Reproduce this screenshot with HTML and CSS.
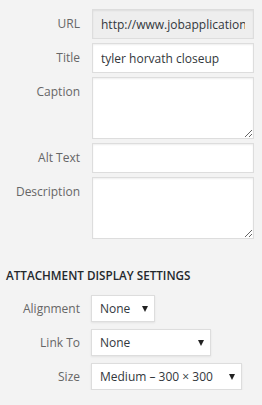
FILE: index.html
```html
<!DOCTYPE html>
<html lang="en">
<head>
    <meta charset="UTF-8">
    <meta name="viewport" content="width=device-width, initial-scale=1.0">
    <title>Attachment Details</title>
    <link rel="stylesheet" href="styles.css">
</head>
<body>
    <div class="details">
        <label class="field-label">URL</label>
        <input class="field-input readonly" type="text" value="http://www.jobapplicationhelp.com/wp-content/uploads/tyler-horvath-closeup.jpg" readonly>

        <label class="field-label">Title</label>
        <input class="field-input" type="text" value="tyler horvath closeup">

        <label class="field-label">Caption</label>
        <textarea class="field-input area"></textarea>

        <label class="field-label">Alt Text</label>
        <input class="field-input" type="text" value="">

        <label class="field-label">Description</label>
        <textarea class="field-input area"></textarea>
    </div>

    <h2 class="section-title">Attachment Display Settings</h2>

    <div class="display-settings">
        <label class="field-label inline">Alignment</label>
        <div class="select small">
            <span>None</span>
            <span class="arrow"></span>
        </div>

        <label class="field-label inline">Link To</label>
        <div class="select medium">
            <span>None</span>
            <span class="arrow"></span>
        </div>

        <label class="field-label inline">Size</label>
        <div class="select large">
            <span>Medium – 300 × 300</span>
            <span class="arrow"></span>
        </div>
    </div>
</body>
</html>
```

FILE: styles.css
```css
body {
    margin: 0;
    background-color: #f3f3f3;
    font-family: "Open Sans", "Noto Sans", sans-serif;
    font-size: 12px;
    color: #666;
}
.details {
    display: grid;
    grid-template-columns: 80px 162px;
    column-gap: 12px;
    row-gap: 4px;
    padding-top: 9px;
}
.field-label {
    text-align: right;
    padding-top: 6px;
    line-height: 18px;
}
.field-label.inline {
    padding-top: 0;
    line-height: 27px;
}
.field-input {
    box-sizing: border-box;
    height: 30px;
    margin: 0;
    padding: 0 8px;
    border: 1px solid #ddd;
    box-shadow: inset 0 1px 2px rgba(0, 0, 0, 0.07);
    background-color: #fff;
    font-family: inherit;
    font-size: 12px;
    color: #32373c;
    outline: none;
}
.field-input.readonly {
    background-color: #eee;
}
.field-input.area {
    height: 62px;
    resize: vertical;
}
.section-title {
    margin: 27px 0 0 6px;
    font-size: 11.7px;
    line-height: 18px;
    font-weight: 600;
    text-transform: uppercase;
    color: #23282d;
}
.display-settings {
    display: grid;
    grid-template-columns: 80px auto;
    column-gap: 11px;
    row-gap: 7px;
    justify-items: start;
    padding-top: 11px;
}
.display-settings .field-label {
    justify-self: stretch;
}
.select {
    box-sizing: border-box;
    height: 27px;
    padding: 0 6px 0 8px;
    display: flex;
    align-items: center;
    justify-content: space-between;
    border: 1px solid #ddd;
    box-shadow: 0 1px 2px rgba(0, 0, 0, 0.07);
    background-color: #fff;
    color: #32373c;
}
.select.small { width: 64px; }
.select.medium { width: 120px; }
.select.large { width: 151px; }
.arrow {
    width: 0;
    height: 0;
    border-left: 3px solid transparent;
    border-right: 3px solid transparent;
    border-top: 6px solid #222;
}
```
